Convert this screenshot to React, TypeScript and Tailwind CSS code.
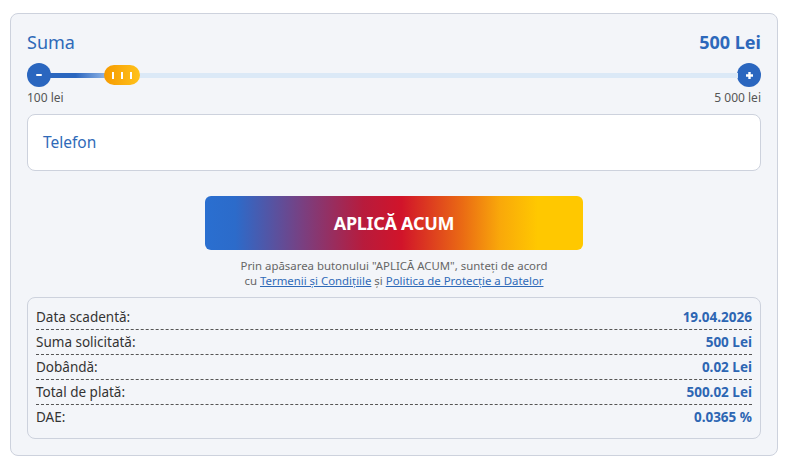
const rows = [
  { label: 'Data scadentă:', value: '19.04.2026' },
  { label: 'Suma solicitată:', value: '500 Lei' },
  { label: 'Dobândă:', value: '0.02 Lei' },
  { label: 'Total de plată:', value: '500.02 Lei' },
  { label: 'DAE:', value: '0.0365 %' },
];

function Slider() {
  // thumb left offset inside the track, in px
  const thumbLeft = 54;
  return (
    <div className="mt-[9px] flex h-6 items-center">
      <button
        type="button"
        className="flex h-6 w-6 shrink-0 items-center justify-center rounded-full bg-[#2a66bf]"
      >
        <span className="block h-[2.5px] w-[6px] rounded-sm bg-white" />
      </button>
      <div className="relative mx-[-1px] h-[5px] flex-1 bg-[#dbe9f7]">
        <div
          className="absolute inset-y-0 left-0 bg-gradient-to-r from-[#2a66bf] from-40% to-[#a9c8ee]"
          style={{ width: thumbLeft + 10 }}
        />
        <div
          className="absolute top-1/2 flex h-5 w-9 -translate-y-1/2 items-center justify-center gap-[7.5px] rounded-full bg-gradient-to-r from-[#f59a00] to-[#ffc21a]"
          style={{ left: thumbLeft }}
        >
          <span className="h-[7px] w-[1.5px] bg-white" />
          <span className="h-[7px] w-[1.5px] bg-white" />
          <span className="h-[7px] w-[1.5px] bg-white" />
        </div>
      </div>
      <button
        type="button"
        className="flex h-6 w-6 shrink-0 items-center justify-center rounded-full bg-[#2a66bf]"
      >
        <svg width="9" height="9" viewBox="0 0 9 9">
          <path d="M4.5 1v7M1 4.5h7" stroke="white" strokeWidth="2.4" />
        </svg>
      </button>
    </div>
  );
}

export default function App() {
  return (
    <div className="min-h-[467px] bg-white pt-[13px] pl-[10px] font-['Noto_Sans',sans-serif]">
      <div className="h-[443px] w-[768px] rounded-[8px] border border-[#cdd2dd] bg-[#f3f5f9] px-[16px] pt-[16px]">
        <div className="flex h-6 items-center justify-between">
          <span className="text-[18px] text-[#2f6ab8]">Suma</span>
          <span className="text-[18px] font-bold text-[#2d68bb]">500 Lei</span>
        </div>

        <Slider />

        <div className="mt-[3px] flex justify-between text-[12px] leading-4 text-[#555]">
          <span>100 lei</span>
          <span>5 000 lei</span>
        </div>

        <div className="mt-[8px] flex h-[57px] items-center rounded-[8px] border border-[#cdd2dd] bg-white px-[15px] text-[15.5px] text-[#2f6ab8]">
          Telefon
        </div>

        <div className="mt-[25px] flex justify-center">
          <button
            type="button"
            className="h-[54px] w-[378px] rounded-[6px] bg-[linear-gradient(to_right,#2a6fd0_0%,#2c6bca_8%,#7a3f80_26%,#b81b3c_42%,#d1142a_52%,#ea6a14_68%,#f9a80a_78%,#ffc800_88%,#ffc800_100%)] text-[18px] font-bold tracking-[-0.3px] text-white"
          >
            APLICĂ ACUM
          </button>
        </div>

        <p className="mt-[8px] text-center text-[11.4px] leading-[15px] text-[#666]">
          Prin apăsarea butonului "APLICĂ ACUM", sunteți de acord
          <br />
          cu{' '}
          <a href="#" className="text-[#2f6ab8] underline">
            Termenii și Condițiile
          </a>{' '}
          și{' '}
          <a href="#" className="text-[#2f6ab8] underline">
            Politica de Protecție a Datelor
          </a>
        </p>

        <div className="mt-[9px] rounded-[8px] border border-[#cdd2dd] px-[8px] pt-[7px] pb-[8px]">
          {rows.map((r, i) => (
            <div
              key={r.label}
              className={
                'flex h-[25px] items-center justify-between text-[13.5px] ' +
                (i < rows.length - 1 ? 'border-b border-dashed border-[#555]' : '')
              }
            >
              <span className="text-[#333]">{r.label}</span>
              <span className="font-bold text-[#2d66b3]">{r.value}</span>
            </div>
          ))}
        </div>
      </div>
    </div>
  );
}
